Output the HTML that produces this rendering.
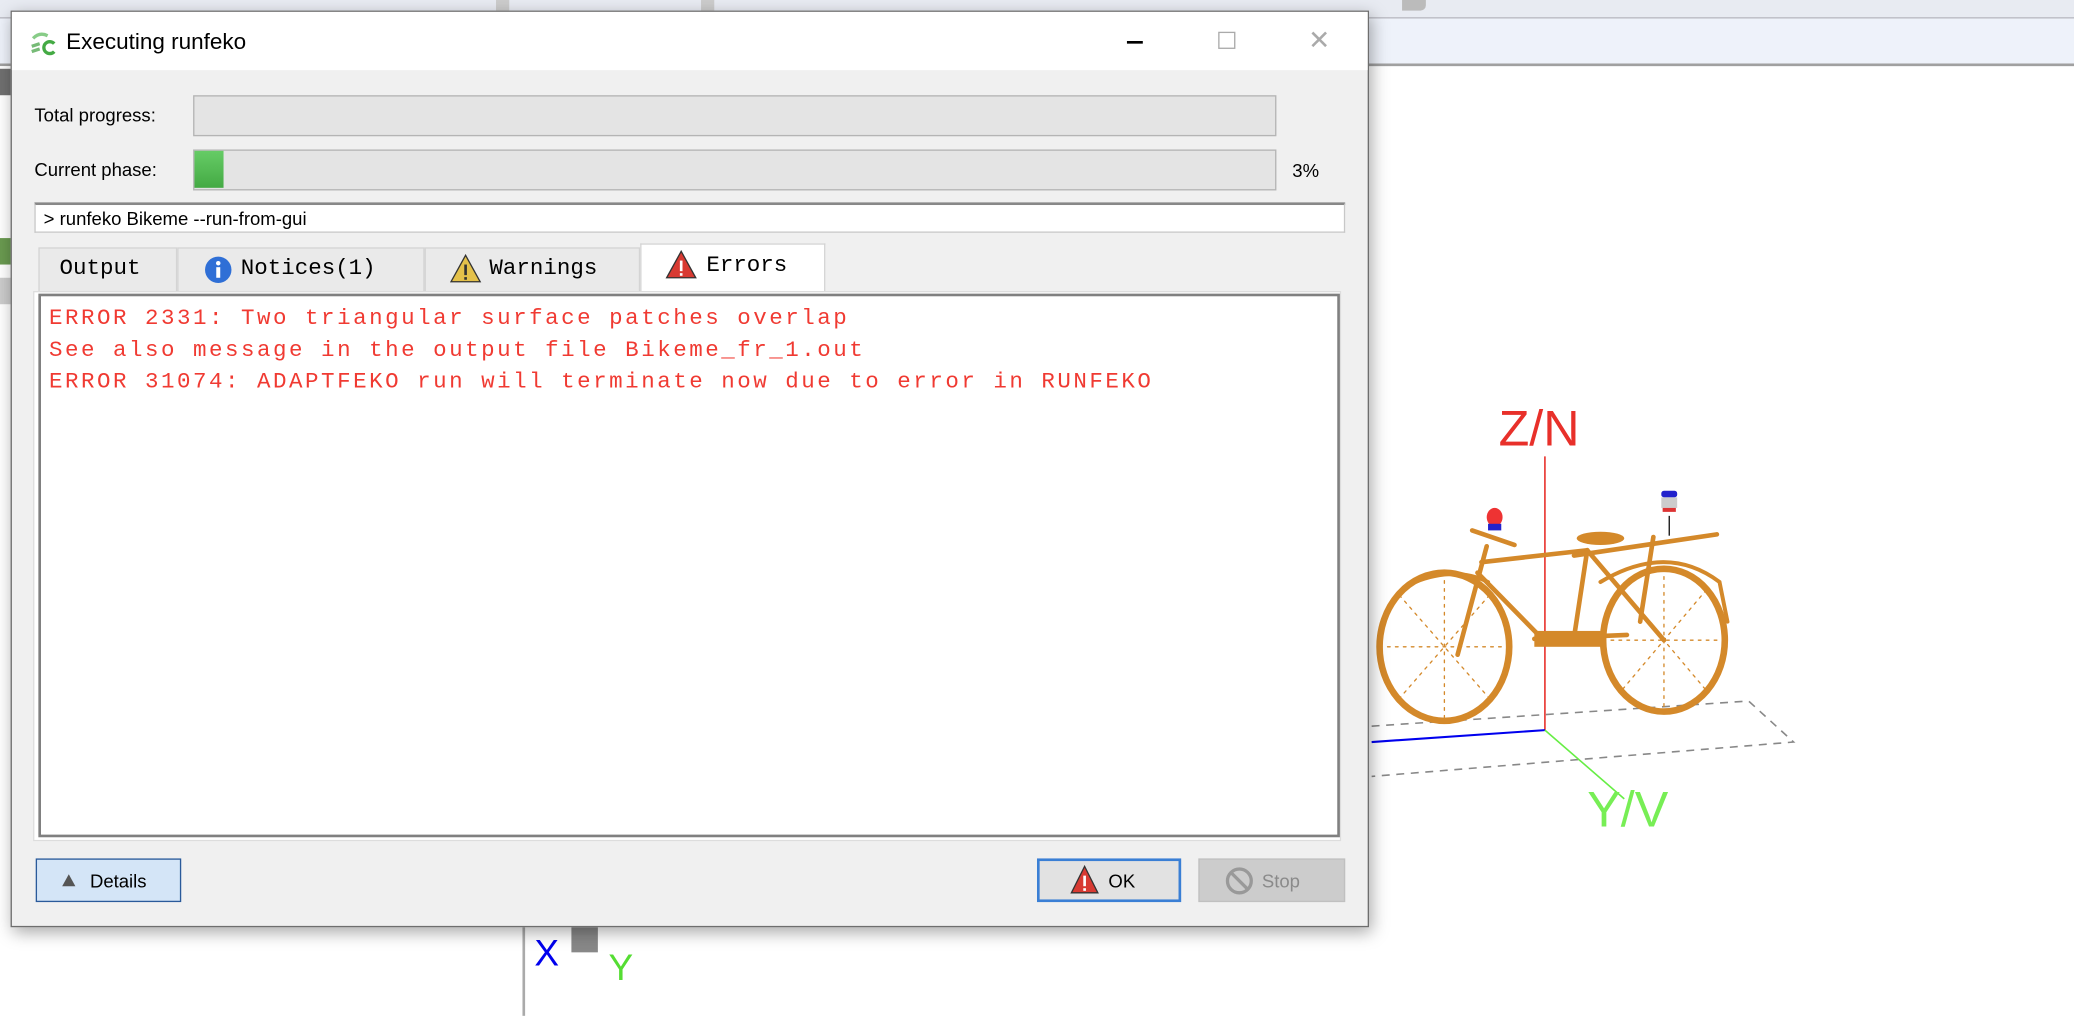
<!DOCTYPE html>
<html><head><meta charset="utf-8"><style>
*{margin:0;padding:0;box-sizing:border-box}
body{width:2074px;height:1016px;overflow:hidden;background:#fff;font-family:"Liberation Sans",sans-serif}
#w{position:absolute;left:0;top:0;width:1568px;height:768px;transform:scale(1.3227);transform-origin:0 0;background:#fff}
.a{position:absolute}
.mono{font-family:"Liberation Mono",monospace}
</style></head><body><div id="w">
<!-- background app -->
<div class="a" style="left:0;top:0;width:1568px;height:14px;background:#e8ebf2;border-bottom:1px solid #b8b8c0"></div>
<div class="a" style="left:0;top:14px;width:1568px;height:36px;background:#eef2fa;border-bottom:2px solid #a0a0a0"></div>
<div class="a" style="left:375px;top:0;width:10px;height:8px;background:#ccc"></div>
<div class="a" style="left:530px;top:0;width:10px;height:8px;background:#ccc"></div>
<div class="a" style="left:1060px;top:0;width:18px;height:8px;background:#bbb;border-radius:0 0 4px 0"></div>
<div class="a" style="left:0;top:50px;width:397px;height:718px;background:#fff;border-right:2px solid #aaa"></div>
<div class="a" style="left:0;top:52px;width:8px;height:20px;background:#707070"></div>
<div class="a" style="left:0;top:180px;width:8px;height:20px;background:#6a9a50"></div>
<div class="a" style="left:0;top:210px;width:8px;height:20px;background:#ccc"></div>
<!-- 3D view -->
<svg class="a" style="left:397px;top:50px" width="1171" height="718" viewBox="397 50 1171 718">
<text x="1133" y="337" font-family="Liberation Sans" font-size="38" fill="#e8302a">Z/N</text>
<line x1="1168" y1="345" x2="1168" y2="552" stroke="#e8302a" stroke-width="1.2"/>
<g stroke="#888" stroke-width="1.2" stroke-dasharray="6 5" fill="none">
<polyline points="1037,549 1322,530 1356,561 1037,587"/></g>
<line x1="1037" y1="561" x2="1168" y2="552" stroke="#0000ee" stroke-width="1.6"/>
<line x1="1168" y1="552" x2="1228" y2="604" stroke="#66ee44" stroke-width="1.2"/>
<text x="1200" y="625" font-family="Liberation Sans" font-size="38" fill="#77ee55">Y/V</text>
<g stroke="#d4892a" fill="none" stroke-linecap="round">
<ellipse cx="1092" cy="489" rx="49" ry="56" stroke-width="5"/>
<ellipse cx="1258" cy="484" rx="46" ry="54" stroke-width="5"/>
<path d="M1210 440 Q1260 410 1300 440 L1306 470" stroke-width="3"/>
<path d="M1070 440 Q1100 428 1125 440" stroke-width="3"/>
<g stroke-width="1" stroke-dasharray="2 4">
<line x1="1092" y1="433" x2="1092" y2="545"/><line x1="1043" y1="489" x2="1141" y2="489"/>
<line x1="1058" y1="450" x2="1126" y2="528"/><line x1="1126" y1="450" x2="1058" y2="528"/>
<line x1="1258" y1="430" x2="1258" y2="538"/><line x1="1212" y1="484" x2="1304" y2="484"/>
<line x1="1226" y1="446" x2="1290" y2="522"/><line x1="1290" y1="446" x2="1226" y2="522"/></g>
<g stroke-width="3.5">
<line x1="1124" y1="413" x2="1102" y2="495"/>
<line x1="1120" y1="425" x2="1200" y2="416"/>
<line x1="1117" y1="433" x2="1168" y2="485"/>
<line x1="1200" y1="416" x2="1190" y2="482"/>
<line x1="1200" y1="416" x2="1258" y2="484"/>
<line x1="1160" y1="483" x2="1230" y2="480"/>
<line x1="1190" y1="420" x2="1298" y2="404"/>
<line x1="1250" y1="406" x2="1240" y2="470"/>
<line x1="1113" y1="401" x2="1145" y2="412"/></g>
<ellipse cx="1210" cy="407" rx="18" ry="5" fill="#d4892a" stroke="none"/>
<rect x="1160" y="477" width="50" height="12" fill="#d4892a" stroke="none"/>
</g>
<ellipse cx="1130" cy="391" rx="6" ry="7" fill="#e33"/><rect x="1125" y="396" width="10" height="5" fill="#22c"/>
<line x1="1262" y1="390" x2="1262" y2="405" stroke="#111"/>
<rect x="1256" y="371" width="12" height="5" fill="#22c" rx="2"/><rect x="1256" y="376" width="12" height="8" fill="#ccc"/><rect x="1257" y="384" width="10" height="3" fill="#d33"/>
<text x="404" y="730" font-family="Liberation Sans" font-size="28" fill="#0000ee">X</text>
<text x="460" y="741" font-family="Liberation Sans" font-size="28" fill="#55dd33">Y</text>
<rect x="432" y="700" width="20" height="20" fill="#888"/>
</svg>
<!-- dialog -->
<div class="a" style="left:8px;top:8px;width:1027px;height:693px;background:#f0f0f0;border:1px solid #6e6e6e;box-shadow:2px 4px 12px rgba(0,0,0,.35)">
 <div class="a" style="left:0;top:0;width:1025px;height:44px;background:#fff"></div>
 <svg class="a" style="left:13px;top:14px" width="22" height="20" viewBox="0 0 22 20"><path d="M3 6 Q8 1 14 4" stroke="#8c8" stroke-width="2.5" fill="none"/><path d="M2 12 L8 10 M2 16 L8 14" stroke="#7b7" stroke-width="2.5"/><path d="M19 10 A4.5 4.5 0 1 0 19 16" stroke="#4a4" stroke-width="2.5" fill="none"/></svg>
 <div class="a" style="left:41px;top:13px;font-size:17px;color:#000">Executing runfeko</div>
 <div class="a" style="left:843px;top:22px;width:12px;height:1.5px;background:#000"></div>
 <div class="a" style="left:912px;top:15px;width:13px;height:13px;border:1px solid #aaa"></div>
 <div class="a" style="left:980px;top:9px;font-size:20px;color:#aaa;font-weight:100">✕</div>
 <div class="a" style="left:17px;top:70px;font-size:14px;color:#000">Total progress:</div>
 <div class="a" style="left:137px;top:63px;width:819px;height:31px;background:#e4e4e4;border:1.5px solid #b4b4b4"></div>
 <div class="a" style="left:17px;top:111px;font-size:14px;color:#000">Current phase:</div>
 <div class="a" style="left:137px;top:104px;width:819px;height:31px;background:#e4e4e4;border:1.5px solid #b4b4b4"><div style="width:22px;height:28px;background:linear-gradient(#6c6,#4a4)"></div></div>
 <div class="a" style="left:968px;top:112px;font-size:14px">3%</div>
 <div class="a" style="left:17px;top:144px;width:991px;height:23px;background:#fff;border:1px solid #c8c8c8;border-top:2px solid #888;font-size:14px;padding:2px 0 0 6px">&gt; runfeko Bikeme --run-from-gui</div>
 <!-- tabs -->
 <div class="a mono" style="left:20px;top:178px;width:105px;height:34px;background:#eaeaea;border:1px solid #d4d4d4;font-size:17px;padding:6px 0 0 15px">Output</div>
 <div class="a mono" style="left:125px;top:178px;width:187px;height:34px;background:#eaeaea;border:1px solid #d4d4d4;font-size:17px;padding:6px 0 0 47px">Notices(1)</div>
 <svg class="a" style="left:145px;top:184px" width="22" height="22"><circle cx="11" cy="11" r="10" fill="#2f6fd6"/><rect x="9.5" y="9" width="3" height="8" fill="#fff"/><circle cx="11" cy="6" r="1.7" fill="#fff"/></svg>
 <div class="a mono" style="left:312px;top:178px;width:163px;height:34px;background:#eaeaea;border:1px solid #d4d4d4;font-size:17px;padding:6px 0 0 48px">Warnings</div>
 <svg class="a" style="left:331px;top:183px" width="24" height="22"><path d="M12 1 L23 21 L1 21 Z" fill="#e4c14a" stroke="#333" stroke-width="1"/><rect x="11" y="8" width="2" height="8" fill="#333"/><rect x="11" y="17.5" width="2" height="2" fill="#333"/></svg>
 <div class="a mono" style="left:475px;top:175px;width:140px;height:38px;background:#fff;border:1px solid #d4d4d4;border-bottom:none;font-size:17px;padding:7px 0 0 49px">Errors</div>
 <svg class="a" style="left:494px;top:180px" width="24" height="22"><path d="M12 1 L23 21 L1 21 Z" fill="#d83a32" stroke="#333" stroke-width="1"/><rect x="11" y="8" width="2" height="8" fill="#fff"/><rect x="11" y="17.5" width="2" height="2" fill="#fff"/></svg>
 <div class="a" style="left:16px;top:211px;width:989px;height:416px;background:#fff;border:1px solid #ddd"></div>
 <div class="a mono" style="left:20px;top:213px;width:984px;height:411px;background:#fff;border:2px solid #808080;color:#f03a32;font-size:17px;line-height:24px;padding:6px 0 0 6px;letter-spacing:1.9px;white-space:pre">ERROR 2331: Two triangular surface patches overlap
See also message in the output file Bikeme_fr_1.out
ERROR 31074: ADAPTFEKO run will terminate now due to error in RUNFEKO</div>
 <!-- buttons -->
 <div class="a" style="left:18px;top:640px;width:110px;height:33px;background:#d4e5f7;border:1.5px solid #2a5a9a;font-size:14px;padding:8px 0 0 40px">Details</div>
 <div class="a" style="left:38px;top:652px;width:0;height:0;border-left:5px solid transparent;border-right:5px solid transparent;border-bottom:9px solid #555"></div>
 <div class="a" style="left:775px;top:640px;width:109px;height:33px;background:#e2e2e2;border:2px solid #3a7fd5;font-size:14px;padding:7px 0 0 52px">OK</div>
 <svg class="a" style="left:799px;top:644px" width="24" height="24"><path d="M12 2 L22 22 L2 22 Z" fill="#d83a32" stroke="#333" stroke-width="1"/><rect x="11" y="9" width="2" height="8" fill="#fff"/><rect x="11" y="18.5" width="2" height="2" fill="#fff"/></svg>
 <div class="a" style="left:897px;top:640px;width:111px;height:33px;background:#cccccc;border:1px solid #c0c0c0;font-size:14px;color:#8a8a8a;padding:8px 0 0 47px">Stop</div>
 <svg class="a" style="left:917px;top:646px" width="22" height="22"><circle cx="11" cy="11" r="9" stroke="#999" stroke-width="2.5" fill="none"/><line x1="5" y1="5" x2="17" y2="17" stroke="#999" stroke-width="2.5"/></svg>
</div>
</div></body></html>
